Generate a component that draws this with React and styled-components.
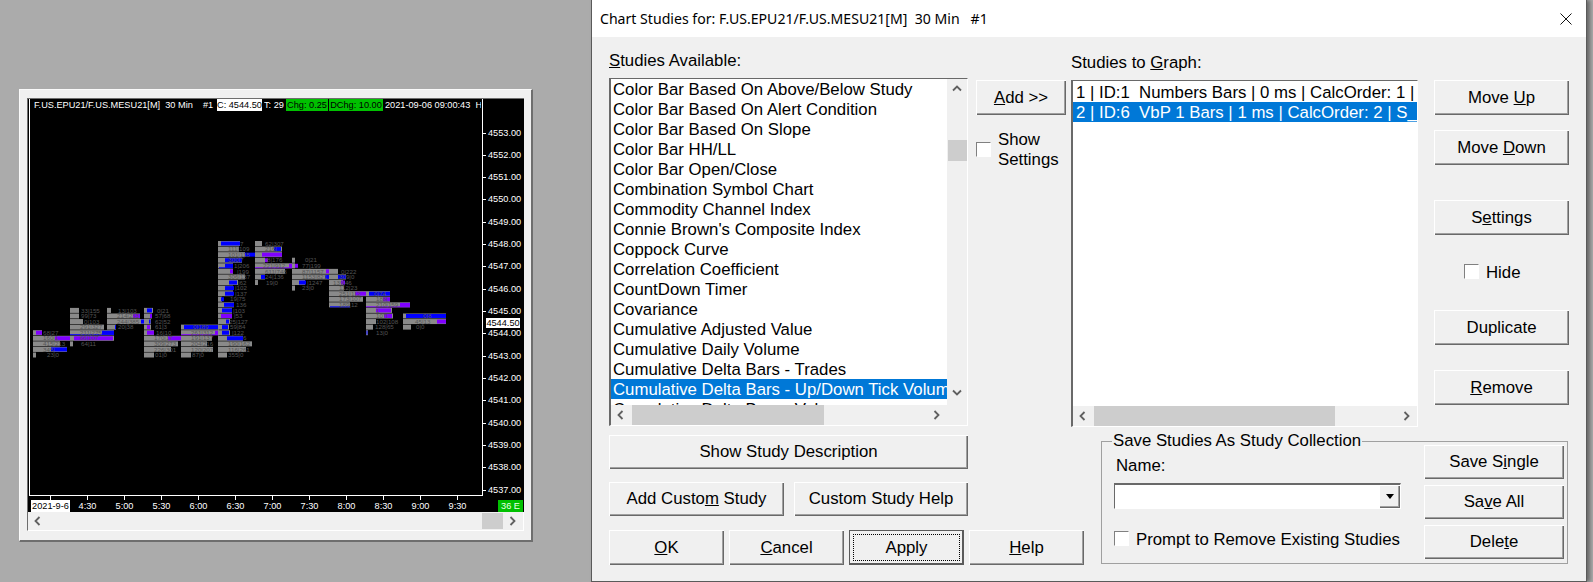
import React from 'react';
import styled, { createGlobalStyle } from 'styled-components';

const GlobalStyle = createGlobalStyle`
  html, body { margin: 0; padding: 0; background: #ababab; }
  body { width: 1593px; height: 582px; overflow: hidden; font-family: "Liberation Sans", Arial, sans-serif; }
`;

const Page = styled.div`
  display: flex;
  align-items: flex-start;
  width: 1593px;
  height: 582px;
`;

/* ---------- chart window ---------- */

const ChartWindow = styled.div`
  width: 514px;
  height: 453px;
  margin: 89px 0 0 19px;
  padding: 8px 7px 9px 7px;
  box-sizing: border-box;
  background: #f0f0f0;
  border-top: 1px solid #fafafa;
  border-left: 1px solid #fafafa;
  border-right: 2px solid #6e6e6e;
  border-bottom: 2px solid #6e6e6e;
  display: flex;
  flex-direction: column;
`;

const ChartSurface = styled.div`
  background: #000;
  border-top: 1px solid #6e6e6e;
  border-left: 1px solid #6e6e6e;
  font-size: 9.2px;
  color: #fff;
`;

const PlotRow = styled.div`
  display: flex;
  height: 397px;
`;

const Plot = styled.div`
  position: relative;
  width: 454px;
  margin-left: 1px;
  box-sizing: border-box;
  border-left: 1px solid #fff;
  border-right: 1px solid #fff;
  border-bottom: 1px solid #fff;
  display: flex;
  flex-direction: column;
  overflow: hidden;
`;

const ChartHeader = styled.div`
  display: flex;
  height: 12px;
  align-items: stretch;
  padding-left: 4px;
  font-size: 9.2px;
  line-height: 13px;
  white-space: pre;
`;

const HeaderText = styled.span`
  width: ${(p) => p.$w}px;
  flex: none;
  overflow: hidden;
`;

const HeaderChip = styled.span`
  flex: none;
  width: ${(p) => p.$w}px;
  margin-right: ${(p) => p.$mr || 0}px;
  text-align: center;
  color: #000;
  background: ${(p) => (p.$green ? '#00c000' : '#fff')};
`;

const Bars = styled.svg`
  display: block;
  width: 452px;
  height: 383px;
`;

const BarLabel = styled.text`
  font-family: "Liberation Sans", Arial, sans-serif;
  font-size: 6.2px;
  fill: #555;
`;

const PriceAxis = styled.div`
  position: relative;
  flex: none;
  width: 41px;
  padding-top: 22.5px;
  box-sizing: border-box;
`;

const PriceLabel = styled.div`
  position: relative;
  height: 22.32px;
  line-height: 22px;
  padding-left: 5px;
  &::before {
    content: '';
    position: absolute;
    left: 0;
    top: 11px;
    width: 3px;
    height: 1px;
    background: #fff;
  }
`;

const CurrentPrice = styled.div`
  position: absolute;
  left: 3px;
  top: 219px;
  width: 34px;
  height: 10px;
  line-height: 10px;
  text-align: center;
  background: #fff;
  color: #000;
`;

const TimeAxis = styled.div`
  display: flex;
  height: 16px;
  padding-left: 4px;
`;

const TimeTick = styled.div`
  position: relative;
  flex: none;
  width: 37px;
  padding-top: 4px;
  text-align: center;
  line-height: 12px;
  &::before {
    content: '';
    position: absolute;
    top: 0;
    left: 18px;
    width: 1px;
    height: 4px;
    background: #fff;
  }
`;

const DateChip = styled.span`
  display: block;
  margin: 0 -1px;
  background: #fff;
  color: #000;
`;

const BarCount = styled.div`
  margin: 4px 1px 0 auto;
  width: 25px;
  height: 12px;
  line-height: 12px;
  text-align: center;
  background: #00c000;
  color: #eaffea;
`;

const ChartScroll = styled.div`
  display: flex;
  align-items: stretch;
  height: 21px;
  padding: 1px 0;
  box-sizing: border-box;
  background: #f0f0f0;
  border-left: 1px solid #6e6e6e;
  border-right: 1px solid #fff;
  border-bottom: 1px solid #fff;
`;

/* ---------- scrollbars ---------- */

const ArrowCell = styled.div`
  flex: none;
  width: ${(p) => p.$w || 20}px;
  height: ${(p) => (p.$h ? `${p.$h}px` : 'auto')};
  display: flex;
  align-items: center;
  justify-content: center;
`;

const Track = styled.div`
  flex: 1;
  position: relative;
  display: flex;
`;

const VSpacer = styled.div`
  flex: 1;
`;

const Thumb = styled.div`
  background: #cdcdcd;
  flex: none;
  width: ${(p) => p.$w}px;
  margin-left: ${(p) => p.$ml || 0}px;
  height: ${(p) => (p.$h ? `${p.$h}px` : 'auto')};
  margin-top: ${(p) => p.$mt || 0}px;
`;

const Chevron = ({ dir, color = '#606060' }) => {
  const points = {
    left: '6.5,1 2.5,5 6.5,9',
    right: '2.5,1 6.5,5 2.5,9',
    up: '1,6.5 5,2.5 9,6.5',
    down: '1,2.5 5,6.5 9,2.5',
  }[dir];
  return (
    <svg width="10" height="10" viewBox="0 0 10 10">
      <polyline points={points} fill="none" stroke={color} strokeWidth="1.8" />
    </svg>
  );
};

/* ---------- dialog ---------- */

const Dialog = styled.div`
  flex: none;
  width: 996px;
  height: 582px;
  margin-left: 58px;
  box-sizing: border-box;
  background: #f0f0f0;
  border: 1px solid #5a5a5a;
  border-top: none;
  box-shadow: 3px 0 4px rgba(0, 0, 0, 0.4);
  color: #000;
  font-size: 16.8px;
`;

const TitleBar = styled.div`
  height: 37px;
  background: #fff;
  display: flex;
  align-items: center;
  justify-content: space-between;
  padding: 0 14px 0 8px;
  font-family: "Noto Sans", sans-serif;
  font-size: 14.1px;
  white-space: pre;
`;

const Upper = styled.div`
  display: flex;
  height: 398px;
  padding-left: 17px;
`;

const Column = styled.div`
  flex: none;
  width: ${(p) => p.$w}px;
  margin-left: ${(p) => p.$ml || 0}px;
  padding-top: ${(p) => p.$pt || 0}px;
  display: flex;
  flex-direction: column;
  align-items: flex-start;
`;

const Label = styled.div`
  height: 20px;
  line-height: 20px;
  margin-left: ${(p) => p.$ml || 0}px;
  white-space: nowrap;
`;

const ListBox = styled.div`
  width: 100%;
  height: ${(p) => p.$h}px;
  margin-top: 7px;
  box-sizing: border-box;
  background: #fff;
  border-top: 1px solid #696969;
  border-left: 2px solid #696969;
  border-right: 1px solid #fff;
  border-bottom: 1px solid #fff;
  display: flex;
  flex-direction: column;
  overflow: hidden;
`;

const ListMain = styled.div`
  flex: 1;
  min-height: 0;
  display: flex;
`;

const Rows = styled.div`
  flex: 1;
  min-width: 0;
  overflow: hidden;
  padding-top: ${(p) => p.$pt || 0}px;
`;

const Row = styled.div`
  height: 20px;
  line-height: ${(p) => p.$lh}px;
  padding-left: ${(p) => p.$pl}px;
  white-space: pre;
  overflow: hidden;
  background: ${(p) => (p.$selected ? '#0078d7' : 'transparent')};
  color: ${(p) => (p.$selected ? '#fff' : '#000')};
`;

const VScroll = styled.div`
  flex: none;
  width: 20px;
  background: #f0f0f0;
  display: flex;
  flex-direction: column;
  align-items: center;
`;

const HScroll = styled.div`
  flex: none;
  display: flex;
  height: 20px;
  background: #f0f0f0;
  padding-right: ${(p) => p.$pr || 0}px;
`;

const Btn = styled.button`
  display: block;
  flex: none;
  width: ${(p) => p.$w}px;
  height: ${(p) => p.$h || 35}px;
  margin-top: ${(p) => p.$mt || 0}px;
  padding: 0;
  position: relative;
  border: 0;
  background: #f0f0f0;
  color: #000;
  font: inherit;
  box-shadow: ${(p) =>
    p.$focus
      ? 'inset 1px 1px 0 #5a5a5a, inset -2px -2px 0 #5a5a5a'
      : 'inset 1px 1px 0 #fff, inset -1px -1px 0 #696969, inset -2px -2px 0 #a0a0a0'};
  ${(p) =>
    p.$focus &&
    `&::after {
      content: '';
      position: absolute;
      inset: 4px 4px 4px 4px;
      border: 1px dotted #000;
    }`}
`;

const CheckRow = styled.div`
  display: flex;
  align-items: center;
  gap: ${(p) => p.$gap || 7}px;
  margin-top: ${(p) => p.$mt || 0}px;
  margin-left: ${(p) => p.$ml || 0}px;
  line-height: 20px;
  height: ${(p) => p.$h || 15}px;
  white-space: nowrap;
`;

const CheckText = styled.span`
  padding-top: 2px;
`;

const Check = styled.span`
  flex: none;
  width: 15px;
  height: 15px;
  box-sizing: border-box;
  background: #fff;
  border: 1px solid;
  border-color: #808080 #fff #fff #808080;
`;

const Lower = styled.div`
  display: flex;
  align-items: flex-start;
  padding-left: 17px;
`;

const LowerLeft = styled.div`
  flex: none;
  width: 475px;
`;

const BtnRow = styled.div`
  display: flex;
  gap: ${(p) => p.$gap}px;
  margin-top: ${(p) => p.$mt}px;
`;

const GroupBox = styled.div`
  position: relative;
  flex: none;
  display: flex;
  width: 467px;
  height: 123px;
  margin: 6px 0 0 17px;
  box-sizing: border-box;
  border: 1px solid #a0a0a0;
`;

const Legend = styled.div`
  position: absolute;
  top: -11px;
  left: 10px;
  padding: 0 1px;
  line-height: 20px;
  background: #f0f0f0;
  white-space: nowrap;
`;

const GroupLeft = styled.div`
  flex: none;
  width: 322px;
  padding: 14px 0 0 12px;
  box-sizing: border-box;
`;

const GroupRight = styled.div`
  flex: none;
  display: flex;
  flex-direction: column;
  gap: 6px;
  padding-top: 3px;
`;

const Combo = styled.div`
  width: 287px;
  height: 26px;
  margin-top: 7px;
  box-sizing: border-box;
  background: #fff;
  border-top: 2px solid #696969;
  border-left: 1px solid #696969;
  border-right: 1px solid #fff;
  border-bottom: 1px solid #fff;
  display: flex;
  justify-content: flex-end;
`;

const ComboButton = styled.div`
  width: 21px;
  height: 23px;
  background: #f0f0f0;
  box-shadow: inset 1px 1px 0 #fff, inset -1px -1px 0 #696969, inset -2px -2px 0 #a0a0a0;
  display: flex;
  align-items: center;
  justify-content: center;
`;

const Caret = styled.span`
  width: 0;
  height: 0;
  border-left: 4.5px solid transparent;
  border-right: 4.5px solid transparent;
  border-top: 5px solid #000;
`;

/* ---------- data ---------- */

const PRICES = [4553, 4552, 4551, 4550, 4549, 4548, 4547, 4546, 4545, 4544, 4543, 4542, 4541, 4540, 4539, 4538, 4537];
const TIMES = ['4:30', '5:00', '5:30', '6:00', '6:30', '7:00', '7:30', '8:00', '8:30', '9:00', '9:30'];

const STUDIES = [
  'Color Bar Based On Above/Below Study',
  'Color Bar Based On Alert Condition',
  'Color Bar Based On Slope',
  'Color Bar HH/LL',
  'Color Bar Open/Close',
  'Combination Symbol Chart',
  'Commodity Channel Index',
  "Connie Brown's Composite Index",
  'Coppock Curve',
  'Correlation Coefficient',
  'CountDown Timer',
  'Covariance',
  'Cumulative Adjusted Value',
  'Cumulative Daily Volume',
  'Cumulative Delta Bars - Trades',
  'Cumulative Delta Bars - Up/Down Tick Volume',
  'Cumulative Delta Bars - Volume',
];

// each row: [grey width, fills [from, to, colour, thin], label, label x]
const B = '#0000ff';
const P = '#8000ff';
const CANDLES = [
  { x: 33, top: 4, rows: [
    [9, [[3, 9, P]], '68|27'],
    [37, [[22, 37, P]], '160|1'],
    [27, [], '415|213'],
    [34, [[18, 34, B]], '345|'],
    [3, [], '23|0', 14],
  ] },
  { x: 70, top: 8, rows: [
    [9, [], '33|155', 11],
    [9, [], '99|73', 11],
    [13, [], '0|103', 14],
    [34, [], '291|327'],
    [44, [[32, 44, B], [0, 44, B, 1]], '211|275'],
    [44, [[4, 43, P]], '66|107'],
    [3, [], '64|11', 11],
  ] },
  { x: 107, top: 8, rows: [
    [4, [], '13|103', 11],
    [33, [[26, 33, P]], '214|233'],
    [44, [[34, 37, B], [42, 43, B]], '244|385'],
    [9, [[8, 9, B]], '20|38', 11],
  ] },
  { x: 144, top: 8, rows: [
    [9, [[3, 8, B]], '0|21', 13],
    [8, [[6, 8, P]], '57|68', 11],
    [7, [[5, 6.5, B]], '62|52', 11],
    [7, [[3, 6, P]], '61|3', 11],
    [10, [[3, 10, P]], '16|10', 12],
    [37, [[24, 37, P]], '170|17'],
    [34, [], '309|273'],
    [27, [], '226|301'],
    [10, [], '01|0', 11],
  ] },
  { x: 181, top: 5, rows: [
    [38, [[3, 37, B]], '0|189', 12],
    [38, [[34, 37, P], [0, 38, P, 1]], '261|312'],
    [31, [], '191|137'],
    [26, [], '204|216'],
    [32, [], '120|207'],
    [10, [], '87|0', 11],
  ] },
  { x: 218, top: 20, rows: [
    [22, [[3, 22, B]], '7', 22],
    [21, [], '111|109'],
    [27, [[27, 37, B]], '101|115'],
    [24, [[7, 24, B]], '300|7'],
    [15, [[7, 15, B], [1, 15, B, 1]], '1|206', 16],
    [15, [[12, 15, P]], '|199', 19],
    [27, [], '306|137'],
    [20, [[11, 19, B]], '|62', 20],
    [15, [[7, 16, B]], '|102', 17],
    [15, [[7, 16, B]], '|137', 17],
    [4, [[3, 6, B]], '19|75', 12],
    [16, [[6, 16, B]], '136', 18],
    [14, [[4, 14, B]], '|103', 15],
    [14, [[3, 14, P]], '|53', 16],
    [12, [[8, 11, B]], '25|127', 11],
    [11, [[4, 10, B]], '59|84', 12],
    [12, [[4, 11, B]], '|122', 14],
    [25, [[9, 25, B]], '6', 25],
    [34, [], '190|162'],
    [28, [], '116|261'],
    [9, [], '355|0', 10],
  ] },
  { x: 255, top: 20, rows: [
    [7, [], '62|307', 10],
    [27, [[19, 26, B]], '216|'],
    [27, [[7, 27, P]], ''],
    [10, [[10, 13, P]], '8|176', 12],
    [37, [[34, 37, P], [0, 37, P, 1], [40, 43, P]], '221|912', 8],
    [30, [], '611|748'],
    [10, [[6, 10, B]], '24|136', 10],
    [3, [], '19|0', 11],
  ] },
  { x: 292, top: 17, rows: [
    [3, [], '0|21', 13],
    [3, [], '77|199', 10],
    [37, [[34, 37, P]], '87|1157'],
    [37, [[33, 37, B]], '1153|821'],
    [13, [[7, 14, B]], '|1247', 15],
    [3, [], '23|0', 10],
  ] },
  { x: 329, top: 15, rows: [
    [9, [], '0|222', 12],
    [17, [[9, 17, B]], '309|0'],
    [14, [[12, 16, P]], '139|46', 4],
    [15, [], '112|23'],
    [37, [[26, 37, P]], '251|112'],
    [34, [], '173|107'],
    [21, [[1, 21, B, 1]], '189|12'],
  ] },
  { x: 366, top: 11, rows: [
    [24, [[3, 24, B]], '0|74', 8],
    [24, [[17, 24, P]], '188|'],
    [44, [[34, 44, P], [0, 44, P, 1]], '210|159'],
    [26, [[10, 25, P]], '1'],
    [27, [[18, 26, P]], '107|'],
    [10, [], '102|108', 10],
    [7, [], '128|65', 9],
    [2, [[0.5, 1.5, B]], '13|0', 10],
  ] },
  { x: 403, top: 7, rows: [
    [43, [[3, 43, B]], '0|8', 20],
    [43, [[34, 43, P]], '45|13', 12],
    [8, [], '0|0', 13],
  ] },
];

const rowCentre = (n) => 355 - n * 5.575;

function Candle({ x, top, rows }) {
  return rows.map(([w, fills, label, labelX = 10], i) => {
    const y = rowCentre(top - i);
    return (
      <g key={i}>
        <rect x={x} y={y - 2.5} width={w} height={5} fill="#8a8a8a" />
        {fills.map(([from, to, colour, thin], j) => (
          <rect
            key={j}
            x={x + from}
            y={thin ? y + 1.5 : y - 2}
            width={to - from}
            height={thin ? 1 : 4}
            fill={colour}
          />
        ))}
        <BarLabel x={x + labelX} y={y + 2.2}>{label}</BarLabel>
      </g>
    );
  });
}

function ListRows({ items, selected, pl, pt, lh }) {
  return (
    <Rows $pt={pt}>
      {items.map((item, i) => (
        <Row key={item} $pl={pl} $lh={lh} $selected={i === selected}>{item}</Row>
      ))}
    </Rows>
  );
}

export default function App() {
  return (
    <>
      <GlobalStyle />
      <Page>
        <ChartWindow>
          <ChartSurface>
            <PlotRow>
              <Plot>
                <ChartHeader>
                  <HeaderText $w={183}>F.US.EPU21/F.US.MESU21[M]  30 Min    #1</HeaderText>
                  <HeaderChip $w={45} $mr={2}>C: 4544.50</HeaderChip>
                  <HeaderText $w={22}>T: 29</HeaderText>
                  <HeaderChip $w={42} $green $mr={1}>Chg: 0.25</HeaderChip>
                  <HeaderChip $w={54} $green $mr={2}>DChg: 10.00</HeaderChip>
                  <HeaderText $w={96}>2021-09-06 09:00:43  H:</HeaderText>
                </ChartHeader>
                <Bars viewBox="30 111 452 383">
                  {CANDLES.map((c) => <Candle key={c.x} {...c} />)}
                </Bars>
              </Plot>
              <PriceAxis>
                {PRICES.map((p) => <PriceLabel key={p}>{p}.00</PriceLabel>)}
                <CurrentPrice>4544.50</CurrentPrice>
              </PriceAxis>
            </PlotRow>
            <TimeAxis>
              <TimeTick><DateChip>2021-9-6</DateChip></TimeTick>
              {TIMES.map((t) => <TimeTick key={t}>{t}</TimeTick>)}
              <BarCount>36 E</BarCount>
            </TimeAxis>
          </ChartSurface>
          <ChartScroll>
            <ArrowCell><Chevron dir="left" /></ArrowCell>
            <Track><Thumb $w={21} $ml={434} /></Track>
            <ArrowCell><Chevron dir="right" /></ArrowCell>
          </ChartScroll>
        </ChartWindow>

        <Dialog>
          <TitleBar>
            <span>Chart Studies for: F.US.EPU21/F.US.MESU21[M]  30 Min   #1</span>
            <svg width="12" height="12" viewBox="0 0 12 12">
              <path d="M0.5 0.5 L11.5 11.5 M11.5 0.5 L0.5 11.5" stroke="#111" strokeWidth="1" />
            </svg>
          </TitleBar>

          <Upper>
            <Column $w={359} $pt={14}>
              <Label><u>S</u>tudies Available:</Label>
              <ListBox $h={348}>
                <ListMain>
                  <ListRows items={STUDIES} selected={15} pl={2} lh={21} />
                  <VScroll>
                    <ArrowCell $h={20}><Chevron dir="up" /></ArrowCell>
                    <Thumb $w={19} $h={21} $mt={41} />
                    <VSpacer />
                    <ArrowCell $h={24}><Chevron dir="down" /></ArrowCell>
                  </VScroll>
                </ListMain>
                <HScroll $pr={20}>
                  <ArrowCell><Chevron dir="left" /></ArrowCell>
                  <Track><Thumb $w={192} $ml={1} /></Track>
                  <ArrowCell><Chevron dir="right" /></ArrowCell>
                </HScroll>
              </ListBox>
            </Column>

            <Column $w={90} $ml={8} $pt={43}>
              <Btn $w={90}><u>A</u>dd &gt;&gt;</Btn>
              <CheckRow $mt={14} $h={40}>
                <Check />
                <CheckText>Show<br />Settings</CheckText>
              </CheckRow>
            </Column>

            <Column $w={347} $ml={5} $pt={16}>
              <Label>Studies to <u>G</u>raph:</Label>
              <ListBox $h={347}>
                <ListMain>
                  <ListRows
                    pl={3}
                    pt={1}
                    lh={22}
                    selected={1}
                    items={[
                      '1 | ID:1  Numbers Bars | 0 ms | CalcOrder: 1 | S_Study',
                      '2 | ID:6  VbP 1 Bars | 1 ms | CalcOrder: 2 | S_Study',
                    ]}
                  />
                </ListMain>
                <HScroll>
                  <ArrowCell><Chevron dir="left" /></ArrowCell>
                  <Track><Thumb $w={241} $ml={1} /></Track>
                  <ArrowCell><Chevron dir="right" /></ArrowCell>
                </HScroll>
              </ListBox>
            </Column>

            <Column $w={135} $ml={16} $pt={43}>
              <Btn $w={135}>Move <u>U</u>p</Btn>
              <Btn $w={135} $mt={15}>Move <u>D</u>own</Btn>
              <Btn $w={135} $mt={35}>S<u>e</u>ttings</Btn>
              <CheckRow $mt={29} $ml={30}>
                <Check />
                <CheckText>Hide</CheckText>
              </CheckRow>
              <Btn $w={135} $mt={31}>Duplicate</Btn>
              <Btn $w={135} $mt={25}><u>R</u>emove</Btn>
            </Column>
          </Upper>

          <Lower>
            <LowerLeft>
              <Btn $w={359} $h={34}>Show Study Description</Btn>
              <BtnRow $gap={10} $mt={13}>
                <Btn $w={175} $h={34}>Add Custo<u>m</u> Study</Btn>
                <Btn $w={174} $h={34}>Custom Study Help</Btn>
              </BtnRow>
              <BtnRow $gap={5} $mt={14}>
                <Btn $w={115}><u>O</u>K</Btn>
                <Btn $w={115}><u>C</u>ancel</Btn>
                <Btn $w={115} $focus>Apply</Btn>
                <Btn $w={115}><u>H</u>elp</Btn>
              </BtnRow>
            </LowerLeft>

            <GroupBox>
              <Legend>Save Studies As Study Collection</Legend>
              <GroupLeft>
                <Label $ml={2}>Name:</Label>
                <Combo>
                  <ComboButton><Caret /></ComboButton>
                </Combo>
                <CheckRow $mt={22}>
                  <Check />
                  <CheckText>Prompt to Remove Existing Studies</CheckText>
                </CheckRow>
              </GroupLeft>
              <GroupRight>
                <Btn $w={140} $h={34}>Save S<u>i</u>ngle</Btn>
                <Btn $w={140} $h={34}>Sa<u>v</u>e All</Btn>
                <Btn $w={140} $h={34}>Dele<u>t</u>e</Btn>
              </GroupRight>
            </GroupBox>
          </Lower>
        </Dialog>
      </Page>
    </>
  );
}
